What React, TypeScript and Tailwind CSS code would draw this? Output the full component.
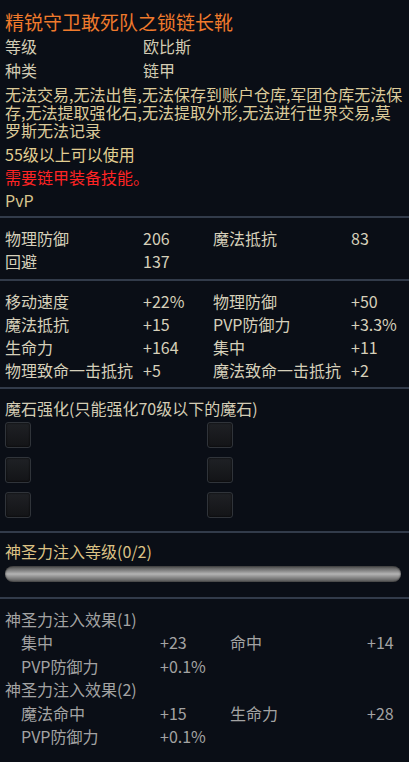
import React from "react";

const font = { fontFamily: '"Noto Sans CJK SC", "Noto Sans", sans-serif' };

function Divider() {
  return <div className="h-[2px] w-full bg-[#323b4a]" />;
}

function StatRow({ a, b, c, d }: { a: string; b: string; c?: string; d?: string }) {
  return (
    <div className="flex h-[23px] items-center text-[16px] text-[#d6d0ba]">
      <span className="w-[138px] whitespace-nowrap">{a}</span>
      <span className="w-[70px] whitespace-nowrap">{b}</span>
      <span className="w-[138px] whitespace-nowrap">{c}</span>
      <span className="whitespace-nowrap">{d}</span>
    </div>
  );
}

function EffectRow({ a, b, c, d }: { a: string; b: string; c?: string; d?: string }) {
  return (
    <div className="flex h-[23.5px] items-center pl-[16px] text-[16px] text-[#a3a3a3]">
      <span className="w-[139px] whitespace-nowrap">{a}</span>
      <span className="w-[70px] whitespace-nowrap">{b}</span>
      <span className="w-[137px] whitespace-nowrap">{c}</span>
      <span className="whitespace-nowrap">{d}</span>
    </div>
  );
}

function Socket() {
  return (
    <div className="h-[26px] w-[26px] rounded-[3px] border border-[#30343a] bg-gradient-to-b from-[#1f2125] to-[#131417] shadow-[inset_0_0_2px_#000]" />
  );
}

export default function App() {
  return (
    <div className="min-h-[762px] w-[409px] bg-[#0a0e16] leading-none" style={font}>
      {/* 名称和基本信息 */}
      <div className="px-[5px] pb-[5px] pt-[9px]">
        <div className="flex h-[24px] items-center text-[19px] text-[#f07a2c]">精锐守卫敢死队之锁链长靴</div>
        <div className="mt-[1px] flex h-[24px] items-center text-[16px] text-[#d3ccb4]">
          <span className="w-[138px]">等级</span>
          <span>欧比斯</span>
        </div>
        <div className="flex h-[24px] items-center text-[16px] text-[#d3ccb4]">
          <span className="w-[138px]">种类</span>
          <span>链甲</span>
        </div>
        <p className="mt-[3px] text-[16px] leading-[18px] text-[#dccb9a]">
          无法交易,无法出售,无法保存到账户仓库,军团仓库无法保存,无法提取强化石,无法提取外形,无法进行世界交易,莫罗斯无法记录
        </p>
        <div className="mt-[3px] flex h-[23px] items-center text-[16px] text-[#e2cf92]">55级以上可以使用</div>
        <div className="flex h-[23px] items-center text-[16px] text-[#ff2424]">需要链甲装备技能。</div>
        <div className="flex h-[23px] items-center text-[16px] text-[#d9c68e]">PvP</div>
      </div>
      <Divider />

      {/* 基础属性 */}
      <div className="px-[5px] pb-[7px] pt-[8px]">
        <StatRow a="物理防御" b="206" c="魔法抵抗" d="83" />
        <StatRow a="回避" b="137" />
      </div>
      <Divider />

      {/* 附加属性 */}
      <div className="px-[5px] pb-[6px] pt-[8px]">
        <StatRow a="移动速度" b="+22%" c="物理防御" d="+50" />
        <StatRow a="魔法抵抗" b="+15" c="PVP防御力" d="+3.3%" />
        <StatRow a="生命力" b="+164" c="集中" d="+11" />
        <StatRow a="物理致命一击抵抗" b="+5" c="魔法致命一击抵抗" d="+2" />
      </div>
      <Divider />

      {/* 魔石 */}
      <div className="px-[5px] pb-[13px] pt-[9px]">
        <div className="flex h-[20px] items-center text-[16px] text-[#d3ccb4]">魔石强化(只能强化70级以下的魔石)</div>
        <div className="mt-[4px] grid grid-cols-[202px_1fr] gap-y-[9px]">
          <Socket />
          <Socket />
          <Socket />
          <Socket />
          <Socket />
          <Socket />
        </div>
      </div>
      <Divider />

      {/* 神圣力 */}
      <div className="px-[5px] pb-[15px] pt-[8px]">
        <div className="flex h-[20px] items-center text-[16px] text-[#dcc285]">神圣力注入等级(0/2)</div>
        <div className="mt-[5px] h-[16px] w-[396px] rounded-full bg-gradient-to-b from-[#4a4a4a] via-[#b4b4b4] to-[#555555] shadow-[inset_0_0_2px_#222]" />
      </div>
      <Divider />

      <div className="px-[5px] pt-[8px]">
        <div className="flex h-[23.5px] items-center text-[16px] text-[#a3a3a3]">神圣力注入效果(1)</div>
        <EffectRow a="集中" b="+23" c="命中" d="+14" />
        <EffectRow a="PVP防御力" b="+0.1%" />
        <div className="flex h-[23.5px] items-center text-[16px] text-[#a3a3a3]">神圣力注入效果(2)</div>
        <EffectRow a="魔法命中" b="+15" c="生命力" d="+28" />
        <EffectRow a="PVP防御力" b="+0.1%" />
      </div>
    </div>
  );
}
